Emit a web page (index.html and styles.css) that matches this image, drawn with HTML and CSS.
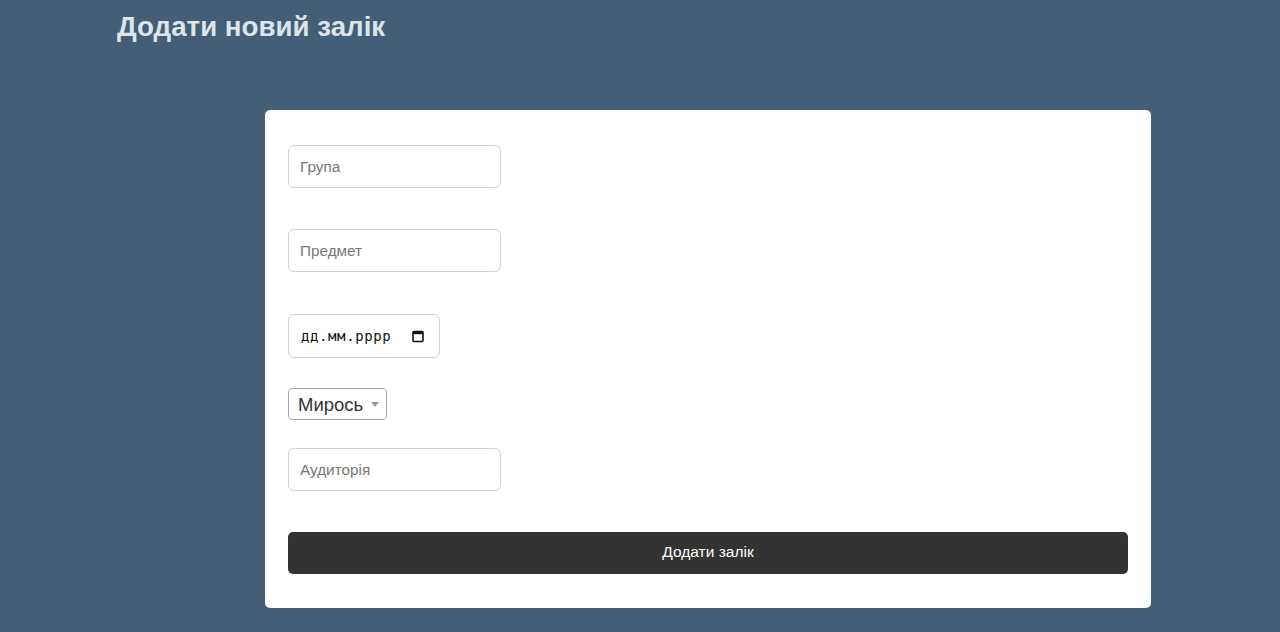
FILE: index.html
```html
<!DOCTYPE html>
<html lang="uk">
<head>
<meta charset="utf-8">
<title>Додати новий залік</title>
<link rel="stylesheet" href="styles.css">
</head>
<body>
<h1 class="title">Додати новий залік</h1>
<form class="card">
  <input class="field" type="text" placeholder="Група">
  <input class="field" type="text" placeholder="Предмет">
  <div class="date-field">
    <span class="date-text">дд.мм.рррр</span>
    <svg class="cal" width="14" height="14" viewBox="0 0 14 14"><rect x="2" y="2.5" width="10" height="10" rx="1" fill="none" stroke="#111" stroke-width="1.6"/><rect x="2" y="2" width="10" height="3.2" fill="#111"/></svg>
  </div>
  <div class="select-wrap">
    <select class="select"><option>Мирось</option></select>
  </div>
  <input class="field" type="text" placeholder="Аудиторія">
  <button class="submit" type="button">Додати залік</button>
</form>
</body>
</html>
```
FILE: styles.css
```css
html, body {
  margin: 0;
  padding: 0;
}
body {
  background: #445f75;
  font-family: "Liberation Sans", Arial, sans-serif;
  height: 632px;
  overflow: hidden;
}
.title {
  margin: 0;
  padding: 11px 0 0 117px;
  font-size: 27.7px;
  font-weight: bold;
  color: #dce4ec;
  line-height: 32px;
}
.card {
  margin: 67px 0 0 265px;
  width: 886px;
  box-sizing: border-box;
  background: #fff;
  border-radius: 5px;
  padding: 35px 23px 34px 23px;
  display: flex;
  flex-direction: column;
  align-items: flex-start;
}
.field {
  width: 213px;
  height: 43px;
  box-sizing: border-box;
  border: 1px solid #d0d0d0;
  border-radius: 6px;
  padding: 0 11px;
  font-family: "Liberation Sans", Arial, sans-serif;
  font-size: 15.3px;
  color: #333;
  margin: 0 0 41px 0;
  outline: none;
}
.field::placeholder {
  color: #777;
}
.date-field {
  width: 152px;
  height: 44px;
  box-sizing: border-box;
  border: 1px solid #d0d0d0;
  border-radius: 6px;
  padding: 0 14px 0 12px;
  display: flex;
  align-items: center;
  justify-content: space-between;
  margin: 1px 0 30px 0;
}
.date-text {
  font-family: "DejaVu Sans Mono", "Liberation Mono", monospace;
  font-size: 14px;
  color: #111;
  letter-spacing: 0.6px;
}
.cal {
  display: block;
}
.select-wrap {
  position: relative;
  margin: 0 0 28px 0;
}
.select-wrap::after {
  content: "";
  position: absolute;
  right: 8px;
  top: 14px;
  border-left: 4px solid transparent;
  border-right: 4px solid transparent;
  border-top: 5px solid #999;
  pointer-events: none;
}
.select {
  -webkit-appearance: none;
  appearance: none;
  width: 99px;
  height: 32px;
  box-sizing: border-box;
  border: 1px solid #aaa;
  border-radius: 4px;
  background: #fff;
  padding: 0 0 0 9px;
  font-family: "Liberation Sans", Arial, sans-serif;
  font-size: 18.5px;
  color: #333;
  outline: none;
}
.submit {
  width: 100%;
  height: 42px;
  border: none;
  border-radius: 5px;
  background: #333;
  color: #fff;
  font-family: "Liberation Sans", Arial, sans-serif;
  font-size: 15.5px;
  padding: 0 0 2px 0;
  cursor: pointer;
}
```
